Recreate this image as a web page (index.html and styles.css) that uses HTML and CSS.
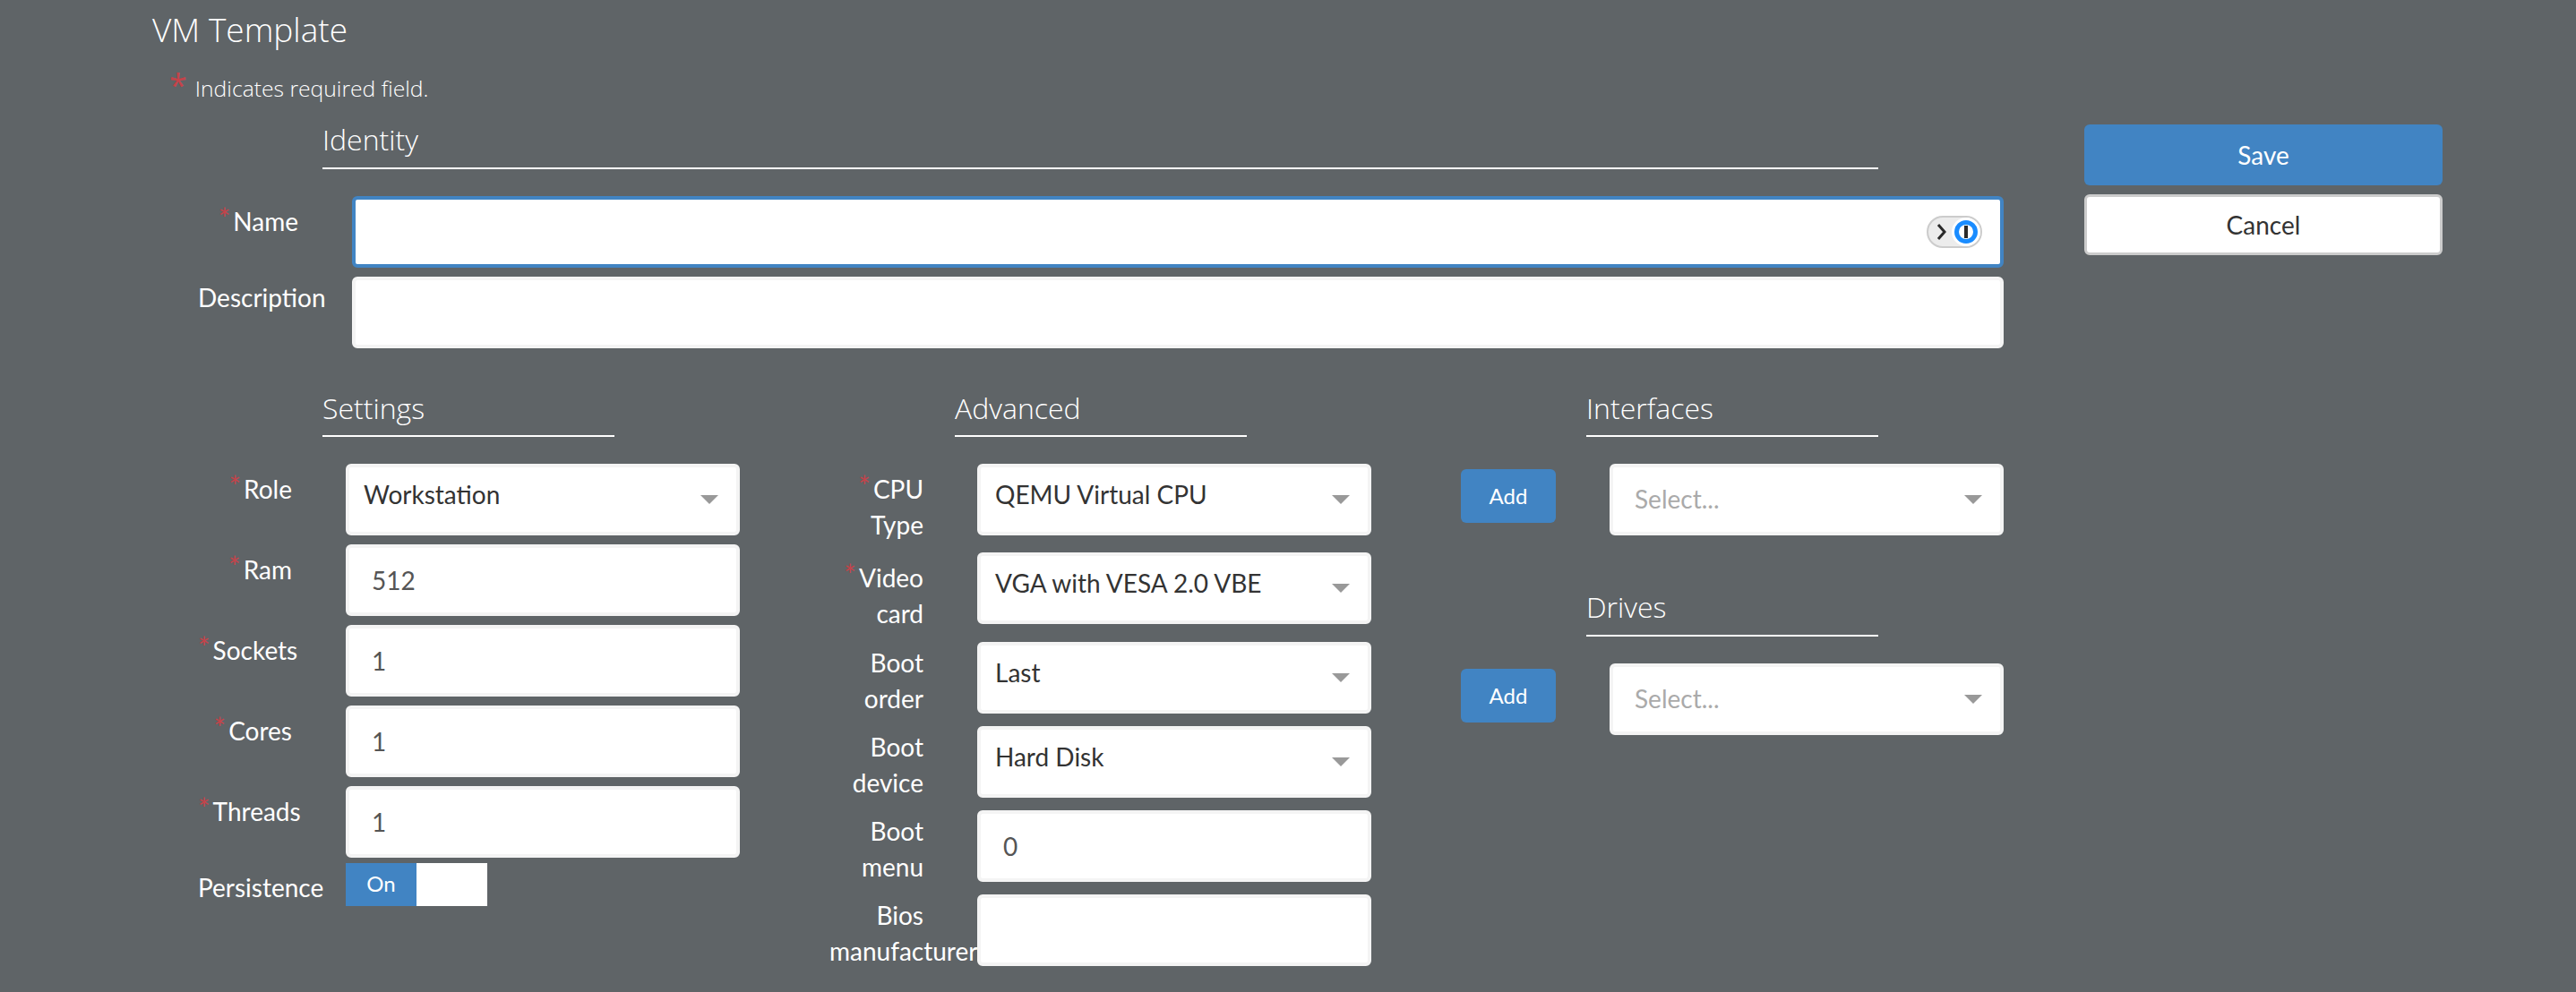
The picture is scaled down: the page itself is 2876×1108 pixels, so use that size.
FILE: index.html
```html
<!DOCTYPE html>
<html lang="en">
<head>
    <meta charset="UTF-8">
    <meta name="viewport" content="width=device-width, initial-scale=1.0">
    <title>VM Template</title>
    <link rel="stylesheet" href="styles.css">
</head>
<body>
    <div class="page">
        <form class="main">
            <h1 class="page-title">VM Template</h1>
            <p class="required-note"><span class="note-star">*</span>Indicates required field.</p>

            <section class="identity">
                <h2 class="section-title section-title-wide">Identity</h2>
                <div class="row">
                    <label class="field-label" for="name"><span class="req">*</span>Name</label>
                    <div class="text-wrap">
                        <input class="text-input is-focused" type="text" id="name">
                        <span class="password-badge">
                            <svg width="62" height="36" viewBox="0 0 62 36">
                                <rect x="1" y="1" width="60" height="34" rx="17" fill="#ececec" stroke="#cccccc" stroke-width="2"/>
                                <circle cx="44" cy="18" r="16" fill="#ffffff"/>
                                <circle cx="44" cy="18" r="10.5" fill="#ffffff" stroke="#1a8cff" stroke-width="5"/>
                                <rect x="42" y="11" width="4" height="14" fill="#2b2b2b"/>
                                <path d="M13 10l7 8-7 8" fill="none" stroke="#2b2b2b" stroke-width="3"/>
                            </svg>
                        </span>
                    </div>
                </div>
                <div class="row">
                    <label class="field-label" for="description">Description</label>
                    <input class="text-input" type="text" id="description">
                </div>
            </section>

            <div class="columns">
                <section class="column">
                    <h2 class="section-title">Settings</h2>
                    <div class="row">
                        <label class="field-label"><span class="req">*</span>Role</label>
                        <div class="select"><span class="select-value">Workstation</span><span class="select-arrow"></span></div>
                    </div>
                    <div class="row">
                        <label class="field-label" for="ram"><span class="req">*</span>Ram</label>
                        <input class="text-input" type="text" id="ram" value="512">
                    </div>
                    <div class="row">
                        <label class="field-label" for="sockets"><span class="req">*</span>Sockets</label>
                        <input class="text-input" type="text" id="sockets" value="1">
                    </div>
                    <div class="row">
                        <label class="field-label" for="cores"><span class="req">*</span>Cores</label>
                        <input class="text-input" type="text" id="cores" value="1">
                    </div>
                    <div class="row">
                        <label class="field-label" for="threads"><span class="req">*</span>Threads</label>
                        <input class="text-input" type="text" id="threads" value="1">
                    </div>
                    <div class="row">
                        <label class="field-label">Persistence</label>
                        <div class="switch"><span class="switch-on">On</span><span class="switch-off"></span></div>
                    </div>
                </section>

                <section class="column">
                    <h2 class="section-title">Advanced</h2>
                    <div class="row row-tall">
                        <label class="field-label"><span class="req">*</span>CPU Type</label>
                        <div class="select"><span class="select-value">QEMU Virtual CPU</span><span class="select-arrow"></span></div>
                    </div>
                    <div class="row row-tall row-video">
                        <label class="field-label"><span class="req">*</span>Video card</label>
                        <div class="select"><span class="select-value">VGA with VESA 2.0 VBE</span><span class="select-arrow"></span></div>
                    </div>
                    <div class="row row-tall">
                        <label class="field-label">Boot order</label>
                        <div class="select"><span class="select-value">Last</span><span class="select-arrow"></span></div>
                    </div>
                    <div class="row row-tall">
                        <label class="field-label">Boot device</label>
                        <div class="select"><span class="select-value">Hard Disk</span><span class="select-arrow"></span></div>
                    </div>
                    <div class="row row-tall">
                        <label class="field-label" for="boot-menu">Boot menu</label>
                        <input class="text-input" type="text" id="boot-menu" value="0">
                    </div>
                    <div class="row row-tall">
                        <label class="field-label" for="bios">Bios manufacturer</label>
                        <input class="text-input" type="text" id="bios">
                    </div>
                </section>

                <section class="column">
                    <h2 class="section-title">Interfaces</h2>
                    <div class="row">
                        <button class="add-btn" type="button">Add</button>
                        <div class="select"><span class="select-value select-placeholder">Select...</span><span class="select-arrow"></span></div>
                    </div>
                    <h2 class="section-title section-title-next">Drives</h2>
                    <div class="row">
                        <button class="add-btn" type="button">Add</button>
                        <div class="select"><span class="select-value select-placeholder">Select...</span><span class="select-arrow"></span></div>
                    </div>
                </section>
            </div>
        </form>

        <div class="actions">
            <button class="btn btn-primary" type="button">Save</button>
            <button class="btn btn-default" type="button">Cancel</button>
        </div>
    </div>
</body>
</html>
```
FILE: styles.css
```css
* {
    box-sizing: border-box;
}

body {
    margin: 0;
    background-color: #5f6467;
    color: #fff;
    font-family: 'Lato', sans-serif;
    font-size: 28px;
    line-height: 40px;
}

.page {
    display: flex;
    padding: 11px 0 0 170px;
}

.main {
    width: 2067px;
    flex-shrink: 0;
}

.page-title {
    margin: 0;
    font-family: 'Open Sans', sans-serif;
    font-size: 37px;
    font-weight: 300;
    line-height: 44px;
}

.required-note {
    margin: 29px 0 0;
    padding-left: 19px;
    font-family: 'Open Sans', sans-serif;
    font-size: 24.7px;
    font-weight: 300;
    line-height: 30px;
}

.note-star {
    margin-right: 9px;
    color: #c5434a;
    font-size: 36px;
    font-weight: 400;
    line-height: 0;
    vertical-align: 0;
}

.section-title {
    width: 326px;
    margin: 0 0 30px 139px;
    padding-bottom: 10px;
    border-bottom: 2px solid #fff;
    font-family: 'Open Sans', sans-serif;
    font-size: 32px;
    font-weight: 300;
    line-height: 40px;
}

.column + .column .section-title {
    margin-left: 140px;
}

.section-title-wide {
    width: 1737px;
    padding-bottom: 11px;
}

.column .section-title-next {
    margin-top: 60px;
    padding-bottom: 11px;
}

.identity {
    margin-top: 22px;
    padding-left: 51px;
}

.identity .field-label {
    width: 112px;
}

.identity .text-input {
    width: 1844px;
}

.row {
    display: flex;
    align-items: flex-start;
    gap: 60px;
    margin-bottom: 10px;
}

.row-tall {
    margin-bottom: 0;
}

.row-video {
    margin-bottom: 1px;
}

.field-label {
    flex-shrink: 0;
    width: 105px;
    padding: 3px 0 11px;
    text-align: right;
}

.req {
    margin-right: 3px;
    color: #c5434a;
    font-size: 32px;
    line-height: 43px;
    vertical-align: 2px;
}

.text-wrap {
    position: relative;
}

.text-input {
    display: block;
    width: 440px;
    height: 80px;
    flex-shrink: 0;
    padding: 0 25px;
    background: #fff;
    border: 4px solid #f4f4f4;
    border-radius: 6px;
    color: #555;
    font-family: 'Lato', sans-serif;
    font-size: 28px;
    outline: none;
}

.is-focused {
    border-color: #4184c3;
}

.password-badge {
    position: absolute;
    top: 22px;
    right: 24px;
    display: block;
    height: 36px;
}

.select {
    display: flex;
    justify-content: space-between;
    flex-shrink: 0;
    width: 440px;
    height: 80px;
    padding: 0 20px 0 16px;
    background: #fff;
    border: 4px solid #f4f4f4;
    border-radius: 6px;
    color: #333;
}

.select-value {
    line-height: 60px;
}

.select-placeholder {
    padding-left: 8px;
    color: #aaa;
    line-height: 71px;
}

.select-arrow {
    width: 0;
    height: 0;
    margin-top: 31px;
    border-top: 10px solid #999;
    border-left: 10px solid transparent;
    border-right: 10px solid transparent;
}

.switch {
    display: flex;
    width: 158px;
    height: 48px;
    margin-top: -4px;
    background: #fff;
    font-size: 24px;
}

.switch-on {
    width: 79px;
    background: #4184c3;
    line-height: 46px;
    text-align: center;
}

.columns {
    display: flex;
    margin-top: 47px;
    padding-left: 51px;
}

.column {
    flex: 0 0 705px;
}

.add-btn {
    flex-shrink: 0;
    width: 106px;
    height: 60px;
    margin-top: 6px;
    padding: 0 0 2px;
    background: #4184c3;
    border: none;
    border-radius: 6px;
    color: #fff;
    font-family: 'Lato', sans-serif;
    font-size: 24px;
}

.actions {
    display: flex;
    flex-direction: column;
    gap: 10px;
    width: 400px;
    margin: 128px 0 0 90px;
}

.btn {
    height: 68px;
    border-radius: 6px;
    font-family: 'Lato', sans-serif;
    font-size: 28px;
}

.btn-primary {
    background: #4184c3;
    border: none;
    color: #fff;
}

.btn-default {
    background: #fff;
    border: 3px solid #ccc;
    color: #333;
}
```
